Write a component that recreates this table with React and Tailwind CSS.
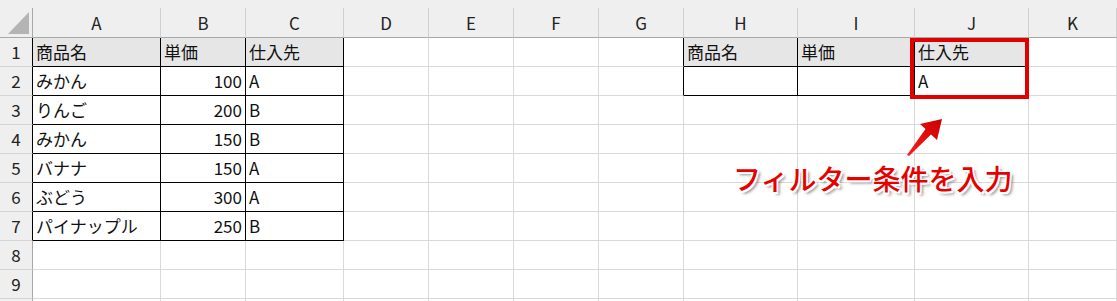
const COLS = ['A', 'B', 'C', 'D', 'E', 'F', 'G', 'H', 'I', 'J', 'K'];

// row index 1..9, col index 0..10 (A..K)
const DATA = {
  1: ['商品名', '単価', '仕入先', '', '', '', '', '商品名', '単価', '仕入先'],
  2: ['みかん', '100', 'A', '', '', '', '', '', '', 'A'],
  3: ['りんご', '200', 'B'],
  4: ['みかん', '150', 'B'],
  5: ['バナナ', '150', 'A'],
  6: ['ぶどう', '300', 'A'],
  7: ['パイナップル', '250', 'B'],
};

const inTable = (r, c) =>
  (r >= 1 && r <= 7 && c >= 0 && c <= 2) || (r >= 1 && r <= 2 && c >= 7 && c <= 9);

const font = { fontFamily: '"Noto Sans CJK JP", "Noto Sans", sans-serif' };

export default function App() {
  const rows = [1, 2, 3, 4, 5, 6, 7, 8, 9, 10];

  return (
    <div className="relative w-[1117px] h-[301px] overflow-hidden bg-white" style={font}>
      {/* top strip */}
      <div className="h-[8px] bg-[#efefef]" />

      <div className="grid grid-cols-[33px_128px_85px_98px_85px_85px_85px_85px_114px_117px_114px_1fr]">
        {/* column header row */}
        <div className="h-[30px] bg-[#efefef] border-r border-b border-[#a8a8a8] relative">
          <svg width="22" height="22" className="absolute left-[8px] top-[4px]">
            <polygon points="21,0 21,22 0,22" fill="#b4b4b4" />
          </svg>
        </div>
        {COLS.map((c) => (
          <div
            key={c}
            className="h-[30px] bg-[#efefef] border-r border-r-[#cfcfcf] border-b border-b-[#a8a8a8] flex items-center justify-center text-[17px] text-[#222]"
          >
            {c}
          </div>
        ))}

        {rows.map((r) => (
          <Row key={r} r={r} />
        ))}
      </div>

      {/* red highlight box around J1:J2 */}
      <div className="absolute left-[910px] top-[38px] w-[119px] h-[61px] border-4 border-[#e00000]" />

      {/* arrow */}
      <svg width="50" height="50" className="absolute left-[900px] top-[112px]">
        <defs>
          <linearGradient id="ag" x1="0" y1="1" x2="1" y2="0">
            <stop offset="0" stopColor="#ff1a1a" />
            <stop offset="1" stopColor="#c80000" />
          </linearGradient>
        </defs>
        <polygon
          points="42,7 20,12 25.5,17 7,43 9,44 31,22.5 37,28"
          fill="url(#ag)"
        />
      </svg>

      {/* callout text */}
      <div className="absolute left-[733px] top-[164px] text-[28px] leading-none font-medium text-[#e60000] whitespace-nowrap [text-shadow:1.5px_1.5px_0_#fff,-1.5px_-1.5px_0_#fff,1.5px_-1.5px_0_#fff,-1.5px_1.5px_0_#fff,3px_3px_3px_rgba(0,0,0,0.45)]">
        フィルター条件を入力
      </div>
    </div>
  );
}

function Row({ r }) {
  const vals = DATA[r] || [];
  return (
    <>
      <div
        className={`h-[29px] bg-[#efefef] border-b border-b-[#d4d4d4] border-r flex items-center justify-center text-[17px] text-[#222] ${
          inTable(r, 0) ? 'border-r-black' : 'border-r-[#a8a8a8]'
        }`}
      >
        {r < 10 ? r : ''}
      </div>
      {COLS.map((c, ci) => {
        const v = vals[ci] || '';
        const num = /^\d+$/.test(v);
        const rightBlack = inTable(r, ci) || inTable(r, ci + 1);
        const bottomBlack = inTable(r, ci) || inTable(r + 1, ci);
        const shaded = r === 1 && inTable(r, ci);
        return (
          <div
            key={c}
            className={`h-[29px] border-r border-b flex items-center text-[17px] text-[#111] whitespace-nowrap overflow-visible ${
              rightBlack ? 'border-r-black' : 'border-r-[#d9d9d9]'
            } ${bottomBlack ? 'border-b-black' : 'border-b-[#d9d9d9]'} ${
              shaded ? 'bg-[#e7e6e6]' : ''
            } ${num ? 'justify-end pr-[3px]' : 'pl-[3px]'}`}
          >
            {v}
          </div>
        );
      })}
    </>
  );
}
